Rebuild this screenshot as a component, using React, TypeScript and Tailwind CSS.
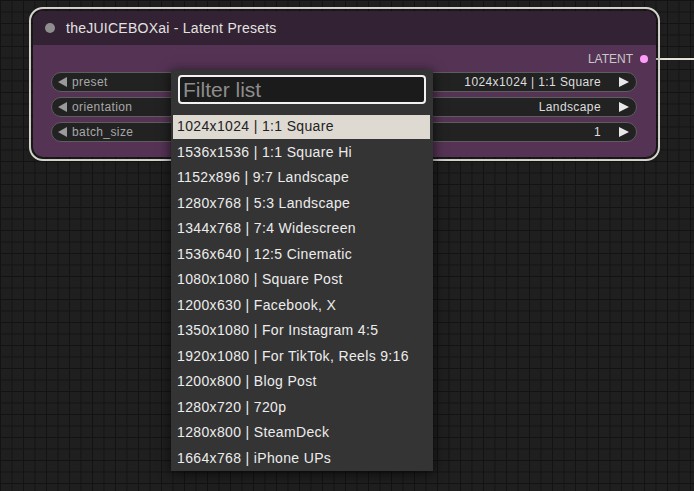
const presets = [
  "1024x1024 | 1:1 Square",
  "1536x1536 | 1:1 Square Hi",
  "1152x896 | 9:7 Landscape",
  "1280x768 | 5:3 Landscape",
  "1344x768 | 7:4 Widescreen",
  "1536x640 | 12:5 Cinematic",
  "1080x1080 | Square Post",
  "1200x630 | Facebook, X",
  "1350x1080 | For Instagram 4:5",
  "1920x1080 | For TikTok, Reels 9:16",
  "1200x800 | Blog Post",
  "1280x720 | 720p",
  "1280x800 | SteamDeck",
  "1664x768 | iPhone UPs",
];

const widgets = [
  { name: "preset", value: "1024x1024 | 1:1 Square" },
  { name: "orientation", value: "Landscape" },
  { name: "batch_size", value: "1" },
];

function Arrow({ dir }: { dir: "left" | "right" }) {
  return (
    <svg width="10" height="10" viewBox="0 0 10 10" className="shrink-0">
      {dir === "left" ? (
        <polygon points="10,0 10,10 1,5" fill="#9a9a9a" />
      ) : (
        <polygon points="0,0 0,10 10,5" fill="#e8e8e8" />
      )}
    </svg>
  );
}

function Widget({ name, value }: { name: string; value: string }) {
  return (
    <div className="h-[20px] flex items-center rounded-full bg-[#222] border border-[#5e5e5e] pl-[5px] pr-[7px] text-[12px] tracking-[0.4px]">
      <Arrow dir="left" />
      <span className="ml-[5px] text-[#a8a8a8]">{name}</span>
      <span className="ml-auto mr-[18px] text-[#dedede]">{value}</span>
      <Arrow dir="right" />
    </div>
  );
}

export default function App() {
  return (
    <div
      className="relative w-full h-[491px] overflow-hidden bg-[#1f1f1f] bg-[linear-gradient(to_right,#131313_1px,transparent_1px),linear-gradient(to_bottom,#131313_1px,transparent_1px)] bg-size-[11.5px_11.5px]"
      style={{ fontFamily: '"Liberation Sans", Arial, sans-serif' }}
    >
      {/* link wire leaving the LATENT output */}
      <div className="absolute left-[655px] top-[58px] w-[40px] h-[2px] bg-[#e6e2d8]" />

      {/* node */}
      <div className="absolute left-[29px] top-[7px] w-[631px] h-[154px] rounded-[14px] border-2 border-[#e6e4dc] p-[2px]">
        <div className="h-full rounded-[10px] overflow-hidden flex flex-col bg-[#553355] shadow-[0_0_6px_rgba(0,0,0,0.5)]">
          <div className="h-[34px] shrink-0 bg-[#332233] flex items-center">
            <div className="ml-[12px] w-[10px] h-[10px] rounded-full bg-[#8e8e8e]" />
            <span className="ml-[11px] text-[14px] tracking-[0.25px] text-[#e2e2e2]">
              theJUICEBOXai - Latent Presets
            </span>
          </div>
          <div className="h-[27px] shrink-0 flex items-center justify-end pr-[8px]">
            <span className="text-[12px] text-[#c8c8c8] mr-[7px] mt-[1px]">LATENT</span>
            <div className="w-[8px] h-[8px] rounded-full bg-[#ff9cf9]" />
          </div>
          <div className="flex flex-col gap-[5px] ml-[18px] mr-[19px]">
            {widgets.map((w) => (
              <Widget key={w.name} name={w.name} value={w.value} />
            ))}
          </div>
        </div>
      </div>

      {/* context menu */}
      <div className="absolute left-[171px] top-[70px] w-[262px] h-[401px] bg-[#343434] shadow-[0_2px_12px_rgba(0,0,0,0.7)] flex flex-col pt-[5px] pl-[2px] pr-[3px]">
        <div className="ml-[5px] mr-[4px] h-[29px] rounded-[4px] border-2 border-[#f2f2f2] bg-[#1b1b1b] flex items-center px-[3px]">
          <span className="text-[21px] text-[#8d8d8d] leading-none">Filter list</span>
        </div>
        <div className="mt-[10px] flex flex-col">
          {presets.map((p, i) => (
            <div
              key={p}
              className={
                i === 0
                  ? "h-[25.5px] flex items-center pl-[4px] text-[14px] tracking-[0.35px] bg-[#dedad2] text-[#222] border-y border-[#343434]"
                  : "h-[25.5px] flex items-center pl-[4px] text-[14px] tracking-[0.35px] text-[#ececec]"
              }
            >
              {p}
            </div>
          ))}
        </div>
      </div>
    </div>
  );
}
